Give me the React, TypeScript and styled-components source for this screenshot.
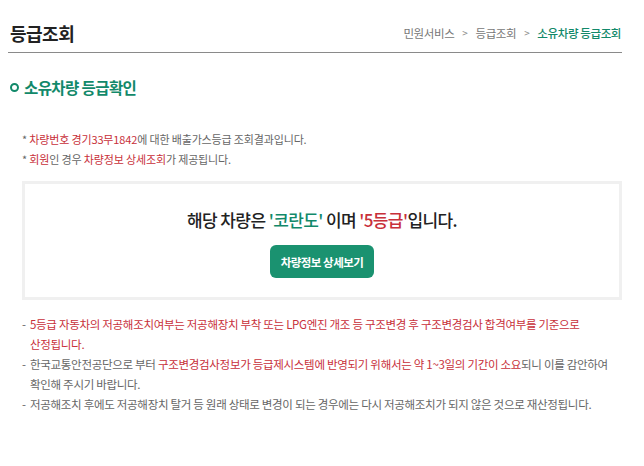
import React from 'react';
import styled, {createGlobalStyle} from 'styled-components';

const GlobalStyle = createGlobalStyle`
  html, body {
    margin: 0;
    padding: 0;
    background: #fff;
  }
  body {
    font-family: "Noto Sans CJK KR", "Noto Sans", sans-serif;
    color: #333;
  }
`

const GREEN = '#12896a'
const RED = '#c8303a'

const crumbs = ['민원서비스', '등급조회']

export default function App() {
    return (
        <Page>
            <GlobalStyle/>
            <Header>
                <PageTitle>등급조회</PageTitle>
                <Breadcrumb>
                    {crumbs.map(c => (
                        <React.Fragment key={c}>
                            <Crumb>{c}</Crumb>
                            <Sep>&gt;</Sep>
                        </React.Fragment>
                    ))}
                    <Crumb $current>소유차량 등급조회</Crumb>
                </Breadcrumb>
            </Header>

            <SectionTitle>
                <Ring/>
                소유차량 등급확인
            </SectionTitle>

            <NoticeList>
                <NoticeItem>
                    * <Red>차량번호 경기33무1842</Red>에 대한 배출가스등급 조회결과입니다.
                </NoticeItem>
                <NoticeItem>
                    * <Red>회원</Red>인 경우 <Red>차량정보 상세조회</Red>가 제공됩니다.
                </NoticeItem>
            </NoticeList>

            <ResultBox>
                <ResultText>
                    해당 차량은 <Green>'코란도'</Green> 이며 <Red>'5등급'</Red>입니다.
                </ResultText>
                <DetailButton>차량정보 상세보기</DetailButton>
            </ResultBox>

            <GuideList>
                <GuideItem>
                    <Red>5등급 자동차의 저공해조치여부는 저공해장치 부착 또는 LPG엔진 개조 등 구조변경 후 구조변경검사 합격여부를 기준으로<br/>
                        산정됩니다.</Red>
                </GuideItem>
                <GuideItem>
                    한국교통안전공단으로 부터 <Red>구조변경검사정보가 등급제시스템에 반영되기 위해서는 약 1~3일의 기간이 소요</Red>되니 이를 감안하여<br/>
                    확인해 주시기 바랍니다.
                </GuideItem>
                <GuideItem>
                    저공해조치 후에도 저공해장치 탈거 등 원래 상태로 변경이 되는 경우에는 다시 저공해조치가 되지 않은 것으로 재산정됩니다.
                </GuideItem>
            </GuideList>
        </Page>
    )
}

const Page = styled.div`
  width: 614px;
  padding: 0 22px 0 8px;
`

const Header = styled.div`
  display: flex;
  align-items: center;
  justify-content: space-between;
  height: 53px;
  padding: 13px 1px 0 2px;
  border-bottom: 1px solid #8a8a8a;
  box-sizing: border-box;
`

const PageTitle = styled.h1`
  margin: 0;
  font-size: 18px;
  font-weight: 700;
  color: #222;
  letter-spacing: -0.5px;
`

const Breadcrumb = styled.div`
  display: flex;
  align-items: center;
  gap: 6px;
  font-size: 11.5px;
  letter-spacing: -0.4px;
`

const Crumb = styled.span<{ $current?: boolean }>`
  color: ${p => p.$current ? GREEN : '#777'};
  font-weight: ${p => p.$current ? 500 : 400};
`

const Sep = styled.span`
  color: #888;
  font-size: 10px;
  padding: 0 2px;
`

const SectionTitle = styled.h2`
  display: flex;
  align-items: center;
  gap: 5px;
  margin: 23px 0 0 2px;
  font-size: 15.5px;
  font-weight: 700;
  color: ${GREEN};
  letter-spacing: -0.6px;
`

const Ring = styled.span`
  width: 5px;
  height: 5px;
  border: 2.5px solid ${GREEN};
  border-radius: 50%;
`

const NoticeList = styled.ul`
  list-style: none;
  margin: 31px 0 0 14px;
  padding: 0;
`

const NoticeItem = styled.li`
  font-size: 11px;
  line-height: 20px;
  color: #666;
  letter-spacing: -0.15px;
`

const Red = styled.span`
  color: ${RED};
`

const Green = styled.span`
  color: ${GREEN};
`

const ResultBox = styled.div`
  display: flex;
  flex-direction: column;
  align-items: center;
  margin: 12px 0 0 14px;
  height: 119px;
  box-sizing: border-box;
  border: 3px solid #f0f0f0;
  padding-top: 23px;
`

const ResultText = styled.p`
  margin: 0;
  font-size: 17px;
  font-weight: 500;
  color: #222;
  letter-spacing: -0.6px;
`

const DetailButton = styled.button`
  margin-top: 13px;
  width: 104px;
  height: 33px;
  border: none;
  border-radius: 6px;
  background: #1a9270;
  color: #fff;
  font-family: inherit;
  font-size: 11.5px;
  font-weight: 700;
  letter-spacing: -0.5px;
  cursor: pointer;
`

const GuideList = styled.ul`
  list-style: none;
  margin: 14px 0 0 14px;
  padding: 0;
`

const GuideItem = styled.li`
  position: relative;
  padding-left: 8px;
  font-size: 11.5px;
  line-height: 20px;
  color: #666;
  letter-spacing: -0.3px;

  &::before {
    content: '-';
    position: absolute;
    left: 0;
  }
`
